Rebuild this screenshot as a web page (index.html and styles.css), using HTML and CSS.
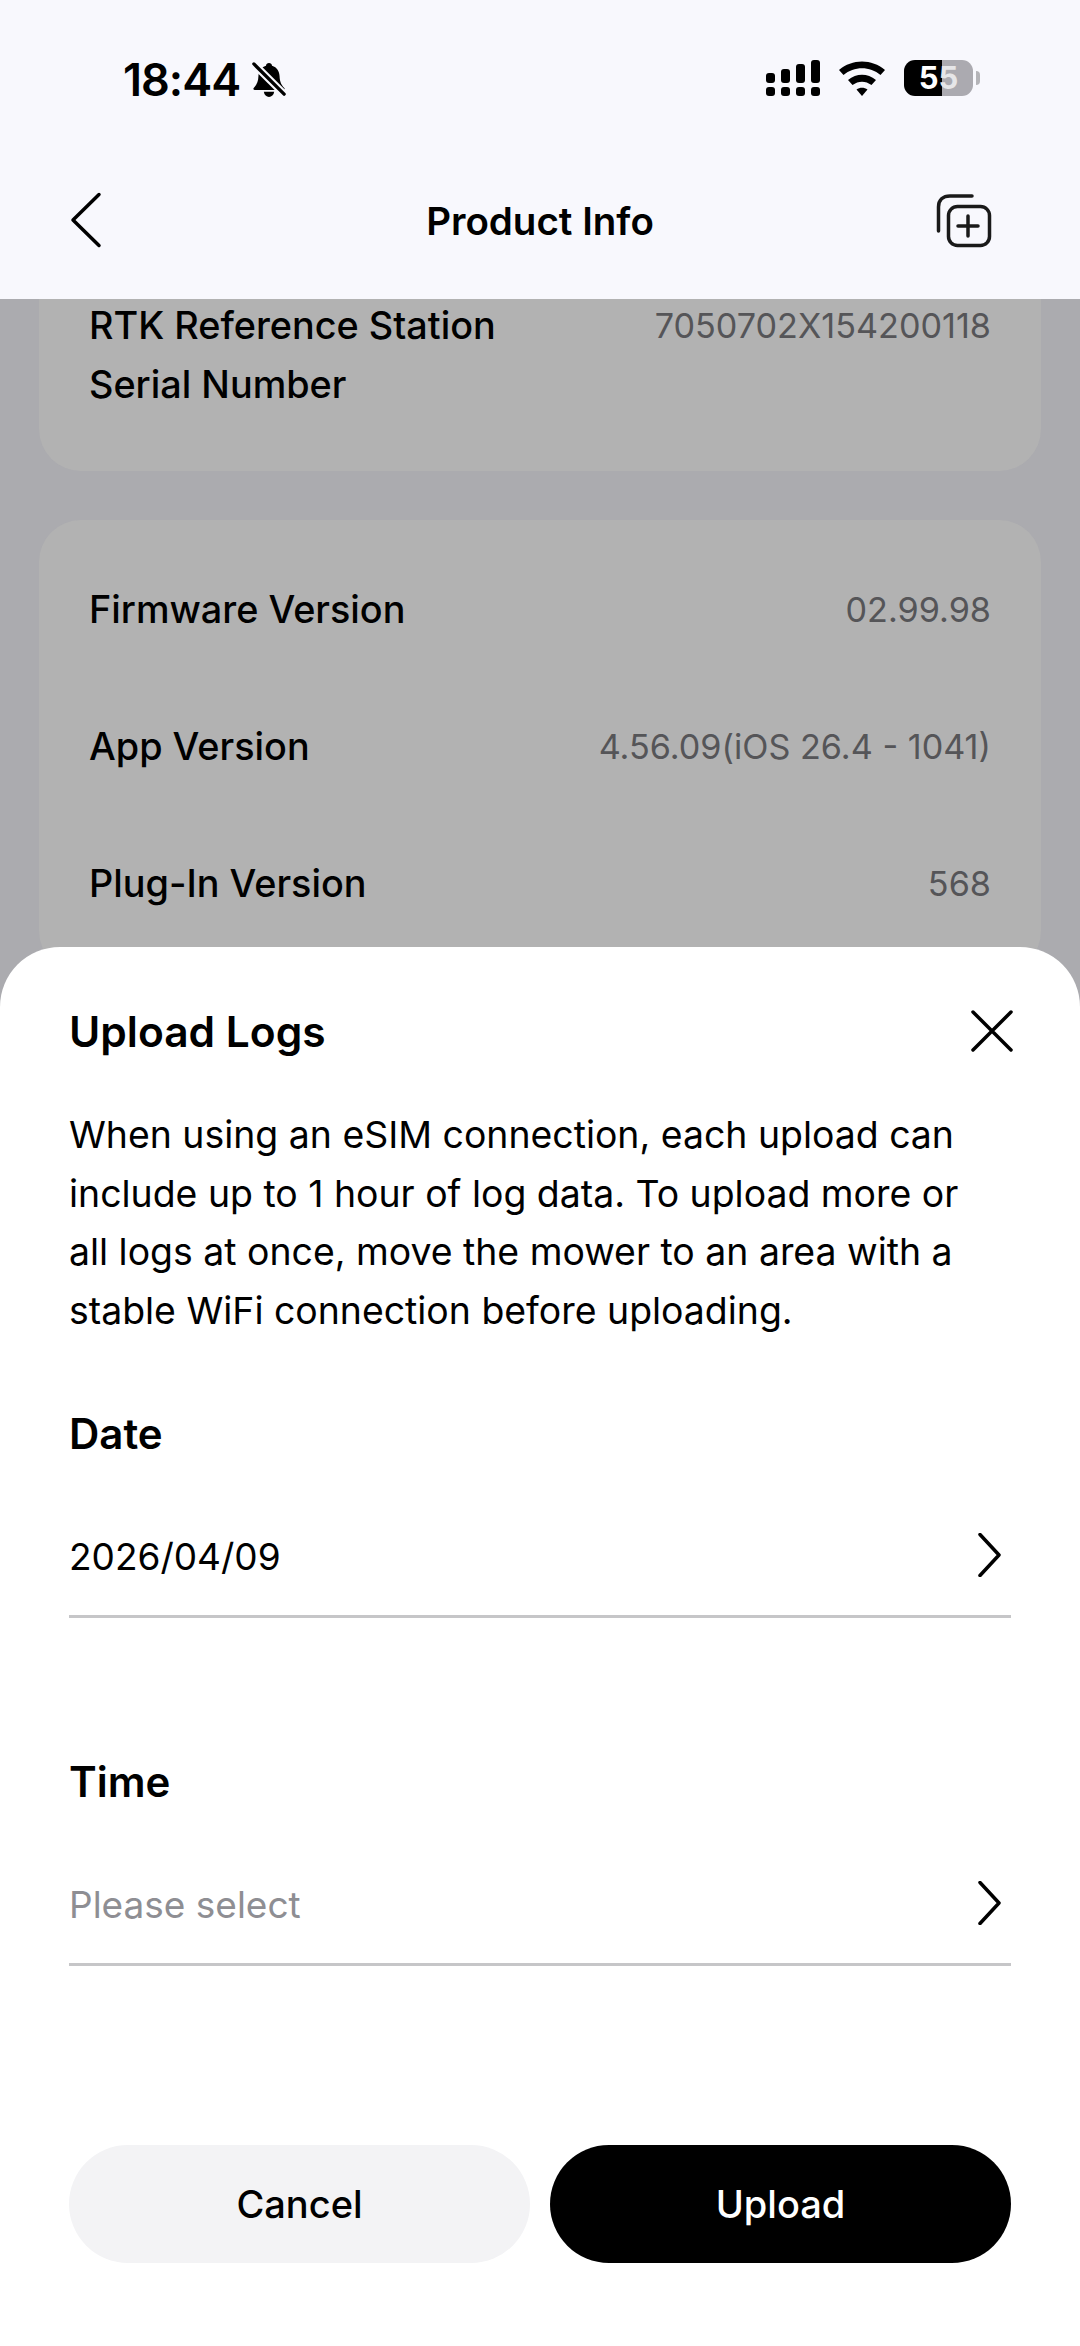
FILE: index.html
```html
<!DOCTYPE html>
<html lang="en">
<head>
    <meta charset="UTF-8">
    <meta name="viewport" content="width=device-width, initial-scale=1.0">
    <title>Product Info</title>
    <link rel="stylesheet" href="styles.css">
</head>
<body>
    <div class="screen">
        <header class="top">
            <div class="status">
                <div class="status-left">
                    <span class="clock">18:44</span>
                    <svg class="bell" viewBox="0 0 36 38" width="34" height="36">
                        <path d="M18 1c1.800 0 3 1.100 3.200 2.800C26.500 5.200 29 10 29.200 15c.2 5 1.300 8.500 5 12.500.8.900.2 2-1 2H2.800c-1.200 0-1.800-1.100-1-2C5.500 23.500 6.600 20 6.800 15 7 10 9.500 5.200 14.800 3.800 15 2.100 16.200 1 18 1z" fill="#000"/>
                        <path d="M12.500 31.500h11c-.5 3.500-2.800 5.500-5.500 5.500s-5-2-5.500-5.500z" fill="#000"/>
                        <path d="M2 2l32 32" stroke="#f8f8fd" stroke-width="8"/>
                        <path d="M2 2l32 32" stroke="#000" stroke-width="3.500" stroke-linecap="round"/>
                    </svg>
                </div>
                <div class="status-right">
                    <svg viewBox="0 0 54 36" width="54" height="36">
                        <rect x="0" y="13" width="9" height="10" rx="3"/>
                        <rect x="15" y="9" width="9" height="14" rx="3"/>
                        <rect x="30" y="4" width="9" height="19" rx="3"/>
                        <rect x="45" y="0" width="9" height="23" rx="3"/>
                        <rect x="0" y="27" width="9" height="9" rx="3"/>
                        <rect x="15" y="27" width="9" height="9" rx="3"/>
                        <rect x="30" y="27" width="9" height="9" rx="3"/>
                        <rect x="45" y="27" width="9" height="9" rx="3"/>
                    </svg>
                    <svg class="wifi" viewBox="0 0 48 36" width="48" height="36">
                        <path d="M1 10C14 -1.500 34 -1.500 47 10l-4.500 5C32 6 16 6 5.500 15z"/>
                        <path d="M10 20c8.500-7 19.500-7 28 0l-4.500 5c-6-4.500-13-4.500-19 0z"/>
                        <path d="M18.500 29.500c3.300-2.300 7.700-2.300 11 0L24 36z"/>
                    </svg>
                    <div class="battery">
                        <div class="battery-body"><span class="battery-num">5</span><span class="battery-num battery-num-light">5</span></div>
                        <div class="battery-cap"></div>
                    </div>
                </div>
            </div>
            <nav class="nav">
                <svg viewBox="0 0 34 56" width="34" height="56" class="ico nav-back">
                    <path d="M29 2.500L3 28l26 25.500"/>
                </svg>
                <h1 class="nav-title">Product Info</h1>
                <svg viewBox="0 0 57 56" width="57" height="56" class="ico ico-add">
                    <path d="M3.500 38V14C3.500 7 8 3 15 3h22"/>
                    <rect x="13.500" y="13.500" width="41" height="39" rx="9"/>
                    <path d="M33 23v20M23 33h20"/>
                </svg>
            </nav>
        </header>

        <main class="list">
            <section class="card card-first">
                <div class="row row-wrap">
                    <span class="label">RTK Reference Station<br>Serial Number</span>
                    <span class="value">7050702X154200118</span>
                </div>
            </section>
            <section class="card">
                <div class="row"><span class="label">Firmware Version</span><span class="value">02.99.98</span></div>
                <div class="row"><span class="label">App Version</span><span class="value">4.56.09(iOS 26.4 - 1041)</span></div>
                <div class="row"><span class="label">Plug-In Version</span><span class="value">568</span></div>
            </section>
        </main>

        <section class="sheet">
            <div class="sheet-head">
                <h2 class="sheet-title">Upload Logs</h2>
                <svg viewBox="0 0 44 44" width="44" height="44" class="ico sheet-close">
                    <path d="M3 3l38 38M41 3L3 41"/>
                </svg>
            </div>
            <p class="sheet-text">When using an eSIM connection, each upload can include up to 1 hour of log data. To upload more or all logs at once, move the mower to an area with a stable WiFi connection before uploading.</p>

            <div class="field">
                <h3 class="field-name">Date</h3>
                <div class="picker">
                    <span>2026/04/09</span>
                    <svg viewBox="0 0 26 44" width="26" height="44" class="ico"><path d="M3 1.500l19 20.500L3 42.500"/></svg>
                </div>
            </div>
            <div class="field">
                <h3 class="field-name">Time</h3>
                <div class="picker picker-empty">
                    <span>Please select</span>
                    <svg viewBox="0 0 26 44" width="26" height="44" class="ico"><path d="M3 1.500l19 20.500L3 42.500"/></svg>
                </div>
            </div>

            <div class="buttons">
                <button class="btn btn-cancel">Cancel</button>
                <button class="btn btn-upload">Upload</button>
            </div>
        </section>
    </div>
</body>
</html>
```

FILE: styles.css
```css
* {
    box-sizing: border-box;
}

html,
body {
    margin: 0;
    padding: 0;
}

body {
    font-family: Inter, "Liberation Sans", sans-serif;
    color: #000;
}

.screen {
    position: relative;
    width: 1080px;
    height: 2346px;
    overflow: hidden;
    background-color: #ababaf;
    display: flex;
    flex-direction: column;
}

.top {
    height: 299px;
    flex-shrink: 0;
    background-color: #f8f8fd;
    position: relative;
    z-index: 1;
}

.status {
    height: 159px;
    padding: 60px 100px 0 123px;
    display: flex;
    justify-content: space-between;
    align-items: flex-start;
}

.status-left {
    display: flex;
    align-items: center;
    gap: 12px;
}

.clock {
    font-size: 45px;
    line-height: 40px;
    font-weight: 600;
    letter-spacing: -1px;
}

.status-right {
    display: flex;
    align-items: center;
    gap: 18px;
}

.status-right svg {
    fill: #000;
}

.battery {
    display: flex;
    align-items: center;
    gap: 3px;
}

.battery-body {
    width: 69px;
    height: 36px;
    border-radius: 11px;
    background: linear-gradient(90deg, #000 0, #000 38px, #abaab0 38px);
    display: flex;
    align-items: center;
    justify-content: center;
}

.battery-num {
    font-size: 31px;
    font-weight: 700;
    color: #fff;
    line-height: 36px;
}

.battery-num-light {
    color: #e6e6e8;
}

.battery-cap {
    width: 4px;
    height: 14px;
    border-radius: 0 4px 4px 0;
    background-color: #b4b4b8;
}

.nav {
    height: 140px;
    padding: 0 70px;
    display: grid;
    grid-template-columns: 1fr auto 1fr;
    align-items: start;
}

.nav-back {
    margin-top: 33px;
}

.nav-title {
    margin: 39px 0 0;
    font-size: 38.500px;
    line-height: 46px;
    font-weight: 600;
}

.ico {
    fill: none;
    stroke: #000;
    stroke-width: 3.500;
    stroke-linecap: round;
    stroke-linejoin: round;
    flex-shrink: 0;
}

.ico-add {
    stroke: #1a1a1a;
    margin: 34px 18px 0 0;
    justify-self: end;
}

.list {
    flex: 1;
    padding: 0 39px;
    overflow: hidden;
}

.card {
    background-color: #b2b2b2;
    border-radius: 42px;
    padding: 21px 50px;
    margin-bottom: 50px;
}

.card-first {
    margin-top: -40px;
    height: 212px;
    border-radius: 0 0 42px 42px;
    padding-top: 37px;
    margin-bottom: 49px;
}

.row {
    display: flex;
    justify-content: space-between;
    align-items: center;
    min-height: 137px;
}

.row-wrap {
    align-items: flex-start;
    min-height: 0;
}

.label {
    font-size: 37.800px;
    line-height: 59px;
    font-weight: 500;
}

.value {
    font-size: 34.200px;
    line-height: 59px;
    color: #555558;
}

.sheet {
    position: absolute;
    left: 0;
    right: 0;
    top: 947px;
    bottom: 0;
    z-index: 2;
    background-color: #fff;
    border-radius: 60px 60px 0 0;
    padding: 0 69px;
    display: flex;
    flex-direction: column;
}

.sheet-head {
    height: 138px;
    padding-top: 30px;
    display: flex;
    justify-content: space-between;
    align-items: center;
}

.sheet-close {
    margin-right: -3px;
}

.sheet-title {
    margin: 0;
    font-size: 42.500px;
    font-weight: 600;
}

.sheet-text {
    margin: 21px 0 18px;
    max-width: 920px;
    font-size: 37.400px;
    line-height: 58.600px;
}

.field {
    margin-top: 46px;
    height: 302px;
}

.field-name {
    margin: 0;
    font-size: 42px;
    line-height: 60px;
    font-weight: 600;
}

.picker {
    margin-top: 36px;
    height: 118px;
    padding: 0 8px 2px 0;
    border-bottom: 3px solid #c6c6c8;
    font-size: 37px;
    display: flex;
    justify-content: space-between;
    align-items: center;
}

.picker svg {
    margin-bottom: 4px;
}

.picker-empty {
    color: #8e8e93;
}

.buttons {
    position: absolute;
    left: 69px;
    right: 69px;
    bottom: 83px;
    display: flex;
    gap: 20px;
}

.btn {
    flex: 1;
    height: 118px;
    border: none;
    border-radius: 59px;
    font-family: inherit;
    font-size: 38px;
    font-weight: 500;
    cursor: pointer;
}

.btn-cancel {
    background-color: #f3f3f5;
    color: #000;
}

.btn-upload {
    background-color: #000;
    color: #fff;
}
```
